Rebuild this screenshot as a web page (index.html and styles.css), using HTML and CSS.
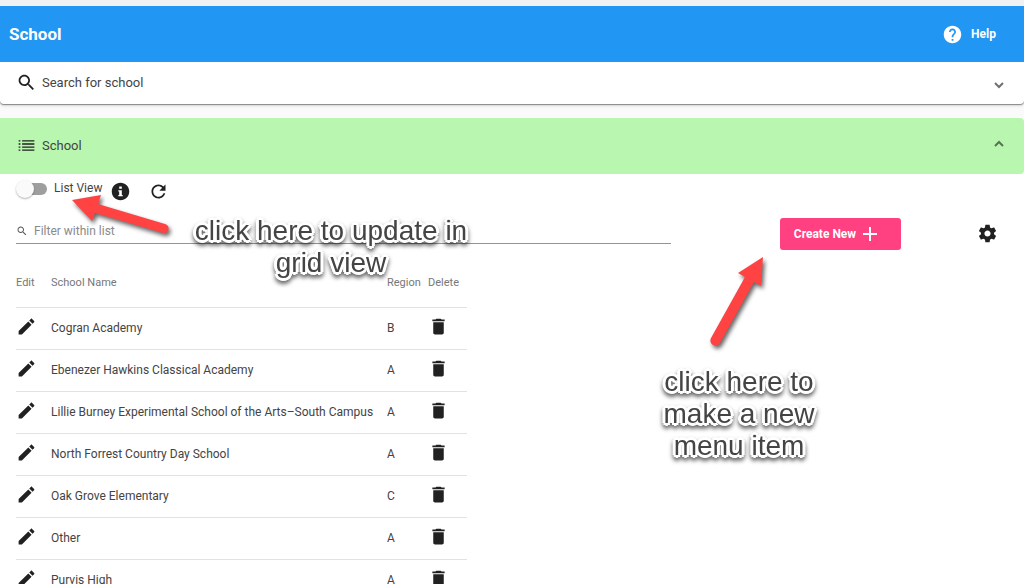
FILE: index.html
```html
<!DOCTYPE html>
<html lang="en">
<head>
    <meta charset="UTF-8">
    <meta name="viewport" content="width=device-width, initial-scale=1.0">
    <title>School</title>
    <link rel="stylesheet" href="styles.css">
</head>
<body>
    <!-- Shared icons -->
    <svg class="sprite" aria-hidden="true">
        <symbol id="icon-edit" viewBox="0 0 24 24"><path d="M3 17.25V21h3.75L17.81 9.94l-3.75-3.75L3 17.25zM20.71 7.04c.39-.39.39-1.02 0-1.41l-2.34-2.34c-.39-.39-1.02-.39-1.41 0l-1.83 1.83 3.75 3.75 1.83-1.83z"/></symbol>
        <symbol id="icon-delete" viewBox="0 0 24 24"><path d="M6 19c0 1.1.9 2 2 2h8c1.100 0 2-.9 2-2V7H6v12zM19 4h-3.500l-1-1h-5l-1 1H5v2h14V4z"/></symbol>
        <symbol id="icon-search" viewBox="0 0 24 24"><path d="M15.500 14h-.79l-.28-.27C15.410 12.590 16 11.110 16 9.500 16 5.910 13.090 3 9.500 3S3 5.910 3 9.500 5.910 16 9.500 16c1.610 0 3.090-.59 4.230-1.570l.27.28v.79l5 4.990L20.490 19l-4.990-5zm-6 0C7.010 14 5 11.990 5 9.500S7.010 5 9.500 5 14 7.010 14 9.500 11.990 14 9.500 14z"/></symbol>
    </svg>

    <header class="toolbar">
        <h1>School</h1>
        <a class="help" href="#help">
            <svg class="icon" viewBox="0 0 24 24"><path d="M12 2C6.480 2 2 6.480 2 12s4.480 10 10 10 10-4.480 10-10S17.520 2 12 2zm1 17h-2v-2h2v2zm2.070-7.750l-.9.920C13.450 12.900 13 13.500 13 15h-2v-.5c0-1.100.450-2.100 1.170-2.830l1.240-1.260c.370-.360.590-.860.590-1.410 0-1.100-.9-2-2-2s-2 .9-2 2H8c0-2.210 1.790-4 4-4s4 1.790 4 4c0 .880-.360 1.680-.930 2.250z"/></svg>
            <span>Help</span>
        </a>
    </header>

    <button class="panel search-panel" type="button" aria-expanded="false">
        <svg class="icon"><use href="#icon-search"/></svg>
        <span>Search for school</span>
        <svg class="chevron" viewBox="0 0 10 6"><path d="M1 1l4 4 4-4"/></svg>
    </button>

    <main class="card">
        <button class="panel list-panel" type="button" aria-expanded="true">
            <svg class="icon" viewBox="0 0 24 24"><path d="M3 6h2v1.500H3zM3 9.500h2V11H3zM3 13h2v1.500H3zM3 16.500h2V18H3zM7 6h14v1.500H7zM7 9.500h14V11H7zM7 13h14v1.500H7zM7 16.500h14V18H7z"/></svg>
            <span>School</span>
            <svg class="chevron" viewBox="0 0 10 6"><path d="M1 5l4-4 4 4"/></svg>
        </button>

        <div class="content">
            <div class="view-row">
                <label class="switch">
                    <input type="checkbox" role="switch">
                    <span>List View</span>
                </label>
                <button class="icon-button" type="button" aria-label="Info">
                    <svg class="icon" viewBox="0 0 24 24"><path d="M12 2C6.480 2 2 6.480 2 12s4.480 10 10 10 10-4.480 10-10S17.520 2 12 2zM14.500 17.500h-5V16h1v-4h-1v-1.500h4V16h1v1.500zm-1-8.700h-3V6.200h3v2.600z"/></svg>
                </button>
                <button class="icon-button" type="button" aria-label="Refresh">
                    <svg class="icon" viewBox="0 0 24 24"><path d="M17.650 6.350C16.200 4.900 14.210 4 12 4c-4.420 0-7.990 3.580-7.990 8s3.570 8 7.990 8c3.730 0 6.840-2.550 7.730-6h-2.080c-.820 2.330-3.040 4-5.650 4-3.310 0-6-2.690-6-6s2.690-6 6-6c1.660 0 3.140.690 4.220 1.780L13 11h7V4l-2.350 2.350z"/></svg>
                </button>
            </div>

            <div class="filter-row">
                <label class="filter">
                    <svg class="icon-small"><use href="#icon-search"/></svg>
                    <input type="text" placeholder="Filter within list" aria-label="Filter within list">
                </label>
                <button class="create" type="button">
                    <span>Create New</span>
                    <svg viewBox="0 0 14 14"><path d="M7 0v14M0 7h14"/></svg>
                </button>
                <button class="icon-button settings" type="button" aria-label="Settings">
                    <svg class="icon" viewBox="0 0 24 24"><path d="M19.430 12.980c.040-.320.070-.640.070-.980s-.030-.660-.070-.980l2.110-1.650c.190-.150.240-.420.120-.640l-2-3.460c-.120-.220-.390-.300-.610-.220l-2.490 1c-.520-.400-1.080-.730-1.690-.980l-.380-2.650C14.460 2.180 14.250 2 14 2h-4c-.250 0-.460.180-.490.420l-.380 2.650c-.610.250-1.170.590-1.690.980l-2.490-1c-.230-.090-.490 0-.610.220l-2 3.460c-.130.220-.070.490.120.640l2.110 1.650c-.040.320-.070.650-.070.980s.030.660.070.980l-2.110 1.650c-.190.150-.240.420-.120.640l2 3.460c.120.220.390.300.610.220l2.490-1c.520.400 1.080.730 1.690.980l.380 2.650c.030.240.240.420.490.420h4c.250 0 .460-.180.490-.420l.380-2.650c.610-.250 1.170-.590 1.690-.980l2.490 1c.230.090.490 0 .610-.220l2-3.460c.120-.220.070-.490-.120-.640l-2.110-1.650zM12 15.500c-1.930 0-3.500-1.570-3.500-3.500s1.570-3.500 3.500-3.500 3.500 1.570 3.500 3.500-1.570 3.500-3.500 3.500z"/></svg>
                </button>
            </div>

            <table class="schools">
                <colgroup>
                    <col class="col-edit">
                    <col>
                    <col class="col-region">
                    <col class="col-delete">
                </colgroup>
                <thead>
                    <tr>
                        <th>Edit</th>
                        <th>School Name</th>
                        <th>Region</th>
                        <th>Delete</th>
                    </tr>
                </thead>
                <tbody id="schoolRows">
                    <!-- School rows are added here -->
                </tbody>
            </table>
        </div>
    </main>

    <!-- Tutorial callouts -->
    <svg class="arrow arrow-view" viewBox="0 0 100 42"><path d="M1 4L30 -1L27 8L94 28A4.500 4.500 0 0 1 92 37L24 17L21 25Z"/></svg>
    <p class="callout callout-view">click here to update in grid view</p>
    <svg class="arrow arrow-create" viewBox="0 0 56 94"><path d="M52 1L50 30L43 26L9 87A4.500 4.500 0 0 1 0 82L34 21L27 17Z"/></svg>
    <p class="callout callout-create">click here to make a new menu item</p>

    <script>
        const schools = [
            ["Cogran Academy", "B"],
            ["Ebenezer Hawkins Classical Academy", "A"],
            ["Lillie Burney Experimental School of the Arts–South Campus", "A"],
            ["North Forrest Country Day School", "A"],
            ["Oak Grove Elementary", "C"],
            ["Other", "A"],
            ["Purvis High", "A"]
        ];
        const schoolRows = document.getElementById("schoolRows");

        function iconButton(icon, label) {
            return `<button class="icon-button" type="button" aria-label="${label}"><svg class="icon"><use href="#icon-${icon}"/></svg></button>`;
        }

        schools.forEach(([name, region]) => {
            const row = schoolRows.insertRow(-1);
            row.insertCell(-1).innerHTML = iconButton("edit", `Edit ${name}`);
            row.insertCell(-1).textContent = name;
            row.insertCell(-1).textContent = region;
            row.insertCell(-1).innerHTML = iconButton("delete", `Delete ${name}`);
        });
    </script>
</body>
</html>
```
FILE: styles.css
```css
* {
    box-sizing: border-box;
}

body {
    position: relative;
    margin: 0;
    padding-top: 6px;
    background-color: #fafafa;
    box-shadow: inset 0 6px 0 #f1f1f1;
    color: #444;
    font-family: Roboto, sans-serif;
    font-size: 12px;
}

button, input {
    font: inherit;
    color: inherit;
}

button {
    margin: 0;
    padding: 0;
    border: none;
    background: none;
    cursor: pointer;
}

.sprite {
    display: none;
}

.icon {
    display: block;
    flex: none;
    width: 21px;
    height: 21px;
    fill: #212121;
}

.toolbar {
    display: flex;
    align-items: center;
    justify-content: space-between;
    height: 56px;
    padding: 0 28px 0 9px;
    background-color: #2196f3;
    color: white;
}

.toolbar h1 {
    margin: 0;
    font-size: 17px;
    font-weight: 700;
}

.help {
    display: flex;
    align-items: center;
    gap: 8px;
    color: white;
    font-weight: 700;
    text-decoration: none;
}

.help .icon {
    fill: white;
}

.panel {
    display: flex;
    align-items: center;
    gap: 5px;
    width: 100%;
    padding: 0 20px 2px 16px;
    font-size: 13px;
    text-align: left;
}

.search-panel {
    height: 42px;
    margin-bottom: 14px;
    border-radius: 0 0 4px 4px;
    background-color: white;
    box-shadow: 0 1px 1px #888, 0 2px 3px #ddd;
}

.list-panel {
    height: 56px;
    border-radius: 0 4px 4px 0;
    background-color: #b9f6af;
}

.chevron {
    width: 10px;
    height: 6px;
    margin: 6px 0 0 auto;
    overflow: visible;
    fill: none;
    stroke: #707070;
    stroke-width: 2;
}

.list-panel .chevron {
    margin-top: 0;
    margin-bottom: 2px;
    stroke: #587552;
}

.card {
    background-color: white;
}

.content {
    padding: 2px 16px 0;
}

.view-row {
    display: flex;
    align-items: center;
    height: 26px;
}

.view-row .icon-button {
    margin: 4px 0 0 8px;
}

.view-row .icon-button + .icon-button {
    margin-left: 17px;
}

.switch {
    display: flex;
    align-items: center;
    gap: 7px;
}

.switch span {
    padding-bottom: 2px;
}

.switch input {
    position: relative;
    appearance: none;
    width: 29px;
    height: 12px;
    margin: 0 0 0 2px;
    border-radius: 6px;
    background-color: #9e9e9e;
}

.switch input::before {
    content: "";
    position: absolute;
    top: -3px;
    left: -2px;
    width: 18px;
    height: 18px;
    border-radius: 50%;
    background-color: #fafafa;
    box-shadow: 0 1px 2px rgba(0, 0, 0, 0.3);
}

.filter-row {
    display: flex;
    align-items: flex-end;
    margin-top: 16px;
    padding-bottom: 6px;
}

.filter {
    display: flex;
    align-items: center;
    gap: 6px;
    width: 66%;
    height: 26px;
    border-bottom: 1px solid #949494;
}

.icon-small {
    width: 12px;
    height: 12px;
    fill: #555;
}

.filter input {
    flex: 1;
    padding: 0;
    border: none;
    outline: none;
    background: none;
}

.filter input::placeholder {
    color: #8a8a8a;
}

.create {
    display: flex;
    align-items: center;
    gap: 7px;
    width: 121px;
    height: 32px;
    margin: 0 0 -6px 11%;
    padding-left: 14px;
    border-radius: 3px;
    background-color: #ff4081;
    color: white;
    font-weight: 700;
}

.create svg {
    width: 14px;
    height: 14px;
    fill: none;
    stroke: white;
    stroke-width: 2;
}

.settings {
    margin: 0 10px 0 auto;
}

.schools {
    table-layout: fixed;
    width: 451px;
    margin-top: 9px;
    border-collapse: collapse;
}

.col-edit {
    width: 35px;
}

.col-region {
    width: 41px;
}

.col-delete {
    width: 39px;
}

.schools th, .schools td {
    padding: 0;
    border-bottom: 1px solid #e2e2e2;
    text-align: left;
    white-space: nowrap;
}

.schools th {
    height: 48px;
    color: #777;
    font-size: 11px;
    font-weight: 400;
}

.schools td {
    height: 42px;
}

.schools .icon-button {
    display: block;
    margin-bottom: 4px;
}

/* Callouts float over the page */
.callout {
    position: absolute;
    margin: 0;
    color: #444;
    font-family: "Liberation Sans", Arial, sans-serif;
    font-size: 28px;
    line-height: 32px;
    text-align: center;
    text-shadow: 3px 0 white, -3px 0 white, 0 3px white, 0 -3px white,
        2px 2px white, -2px 2px white, 2px -2px white, -2px -2px white;
    filter: drop-shadow(0 3px 2px rgba(0, 0, 0, 0.6));
}

.callout-view {
    top: 215px;
    left: 186px;
    width: 290px;
}

.callout-create {
    top: 366px;
    left: 654px;
    width: 170px;
}

.arrow {
    position: absolute;
    overflow: visible;
    fill: #ff4343;
    filter: drop-shadow(2px 3px 2px rgba(0, 0, 0, 0.6));
}

.arrow-view {
    top: 196px;
    left: 71px;
    width: 100px;
    height: 42px;
}

.arrow-create {
    top: 256px;
    left: 711px;
    width: 56px;
    height: 94px;
}
```
